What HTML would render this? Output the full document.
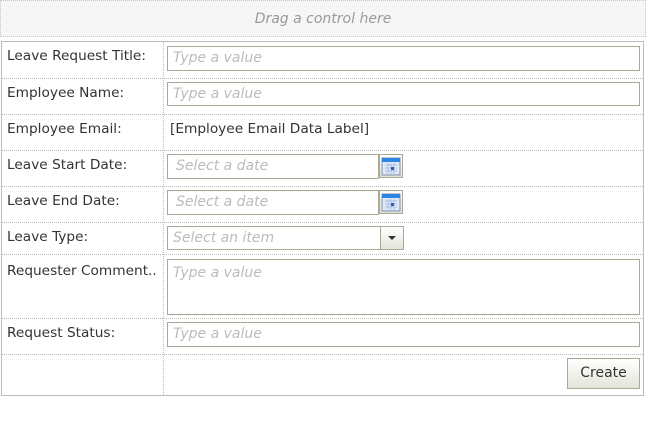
<!DOCTYPE html>
<html><head><style>
body{margin:0;width:646px;height:434px;background:#fff;font-family:"DejaVu Sans","Liberation Sans",sans-serif;font-size:13.7px;color:#333;position:relative;overflow:hidden}
.a{position:absolute}
.drag{left:0;top:0;width:644px;height:35px;border:1px dotted #c4c4c4;background:#f6f6f6;color:#999;font-style:italic;text-align:center;line-height:37px;font-size:14px}
.tbl{left:1px;top:41px;width:641px;height:353px;border:1px solid #bbb}
.hl{left:2px;width:641px;border-top:1px dotted #bbb;height:0}
.vl{left:163px;top:42px;height:353px;border-left:1px dotted #bbb}
.lbl{left:7px}
.in{border:1px solid #a9a995;background:#fff;color:#bbb;font-style:italic;box-sizing:border-box;padding-left:5px;line-height:23px;font-size:14px}
.btn{border:1px solid #a9a995;box-sizing:border-box;background:linear-gradient(#fff,#e4e4da)}
</style></head><body>
<div class="a drag">Drag a control here</div>
<div class="a tbl"></div>
<div class="a vl"></div>
<div class="a hl" style="top:78px"></div>
<div class="a hl" style="top:114px"></div>
<div class="a hl" style="top:150px"></div>
<div class="a hl" style="top:186px"></div>
<div class="a hl" style="top:222px"></div>
<div class="a hl" style="top:254px"></div>
<div class="a hl" style="top:318px"></div>
<div class="a hl" style="top:354px"></div>

<div class="a lbl" style="top:48px">Leave Request Title:</div>
<div class="a lbl" style="top:85px">Employee Name:</div>
<div class="a lbl" style="top:121px">Employee Email:</div>
<div class="a lbl" style="top:157px">Leave Start Date:</div>
<div class="a lbl" style="top:193px">Leave End Date:</div>
<div class="a lbl" style="top:229px">Leave Type:</div>
<div class="a lbl" style="top:263px">Requester Comment..</div>
<div class="a lbl" style="top:325px">Request Status:</div>

<div class="a in" style="left:167px;top:46px;width:473px;height:25px">Type a value</div>
<div class="a in" style="left:167px;top:82px;width:473px;height:24px">Type a value</div>
<div class="a" style="left:170px;top:121px">[Employee Email Data Label]</div>
<div class="a in" style="left:167px;top:154px;width:212px;height:25px;padding-left:8px">Select a date</div>
<div class="a btn" style="left:379px;top:154px;width:24px;height:24px"><svg width="22" height="22" viewBox="0 0 22 22"><rect x="2" y="3" width="18" height="17" fill="#dfe8f8" stroke="#7d8fb0"/><rect x="2" y="3" width="18" height="4" fill="#2b86e4"/><path d="M5 10h12M5 13h12M5 16h12M8 8v11M11 8v11M14 8v11" stroke="#9fb4dc" stroke-width=".7"/><rect x="11" y="12" width="3" height="3" fill="#3553c8"/></svg></div>
<div class="a in" style="left:167px;top:190px;width:212px;height:25px;padding-left:8px">Select a date</div>
<div class="a btn" style="left:379px;top:190px;width:24px;height:24px"><svg width="22" height="22" viewBox="0 0 22 22"><rect x="2" y="3" width="18" height="17" fill="#dfe8f8" stroke="#7d8fb0"/><rect x="2" y="3" width="18" height="4" fill="#2b86e4"/><path d="M5 10h12M5 13h12M5 16h12M8 8v11M11 8v11M14 8v11" stroke="#9fb4dc" stroke-width=".7"/><rect x="11" y="12" width="3" height="3" fill="#3553c8"/></svg></div>
<div class="a in" style="left:167px;top:226px;width:214px;height:24px">Select an item</div>
<div class="a btn" style="left:380px;top:226px;width:24px;height:24px"><svg width="22" height="22"><path d="M7 9h8l-4 4z" fill="#333"/></svg></div>
<div class="a in" style="left:167px;top:259px;width:473px;height:56px;line-height:26px">Type a value</div>
<div class="a in" style="left:167px;top:322px;width:473px;height:25px">Type a value</div>
<div class="a btn" style="left:567px;top:358px;width:73px;height:31px;text-align:center;line-height:29px;font-size:14px;color:#333">Create</div>
</body></html>
